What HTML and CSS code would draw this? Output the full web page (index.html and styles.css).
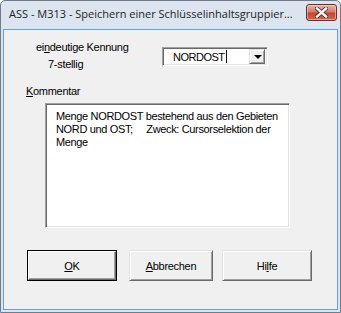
FILE: index.html
```html
<!DOCTYPE html>
<html>
<head>
<meta charset="utf-8">
<link rel="stylesheet" href="styles.css">
</head>
<body>
<div class="window">
  <div class="titlebar">
    <span class="title">ASS - M313 - Speichern einer Schlüsselinhaltsgruppier...</span>
    <div class="close">
      <svg width="13" height="11" viewBox="0 0 13 11">
        <path d="M2 1.5 L11 9.5 M11 1.5 L2 9.5" stroke="#4a2a2a" stroke-width="4" stroke-linecap="square"/>
        <path d="M2 1.5 L11 9.5 M11 1.5 L2 9.5" stroke="#ffffff" stroke-width="2.4" stroke-linecap="square"/>
      </svg>
    </div>
  </div>
  <div class="client">
    <div class="idrow">
      <div class="idlabels">
        <span class="lbl1">ei<u>n</u>deutige Kennung</span>
        <span class="lbl2">7-stellig</span>
      </div>
      <div class="combo">
        <span class="combotext">NORDOST<span class="caret"></span></span>
        <span class="dropbtn"><span class="tri"></span></span>
      </div>
    </div>
    <div class="kommentar"><u>K</u>ommentar</div>
    <div class="memo">Menge NORDOST bestehend aus den Gebieten<br>NORD und OST;&nbsp;&nbsp;&nbsp;&nbsp; Zweck: Cursorselektion der<br>Menge</div>
    <div class="buttons">
      <div class="btn default"><div class="btninner"><u>O</u>K</div></div>
      <div class="btn abbr"><div class="btninner"><u>A</u>bbrechen</div></div>
      <div class="btn"><div class="btninner">Hi<u>l</u>fe</div></div>
    </div>
  </div>
</div>
</body>
</html>
```
FILE: styles.css
```css
html, body {
  margin: 0;
  padding: 0;
  background: #ffffff;
}
.window {
  width: 341px;
  height: 313px;
  box-sizing: border-box;
  border: 1px solid #6f7c8a;
  border-radius: 5px 5px 0 0;
  background: #dbe4ef;
  padding: 0 2px 2px 2px;
  display: flex;
  flex-direction: column;
}
.titlebar {
  height: 28px;
  display: flex;
  align-items: flex-start;
  position: relative;
}
.title {
  font-family: "Open Sans", "DejaVu Sans", sans-serif;
  font-size: 11px;
  color: #1e1e1e;
  margin-top: 5px;
  margin-left: 6px;
  white-space: nowrap;
}
.close {
  position: absolute;
  left: 303px;
  top: 3px;
  width: 29px;
  height: 15px;
  border: 1px solid #6b2f2a;
  border-radius: 3px;
  background: linear-gradient(#eab3a8 0%, #d97a68 45%, #c8432f 55%, #d4664e 100%);
  box-shadow: inset 0 0 0 1px rgba(255,220,210,0.5);
  display: flex;
  align-items: center;
  justify-content: center;
}
.client {
  flex: 1;
  background: #f0f0f0;
  border: 1px solid #5aa3dc;
  font-family: "Liberation Sans", Arial, sans-serif;
  font-size: 11px;
  letter-spacing: -0.3px;
  color: #000;
  display: flex;
  flex-direction: column;
}
.idrow {
  display: flex;
  margin-top: 11px;
}
.idlabels {
  display: flex;
  flex-direction: column;
  width: 126px;
  padding-left: 32px;
}
.lbl1 {
  height: 17px;
}
.lbl2 {
  padding-left: 12px;
}
.combo {
  margin-top: 6px;
  width: 106px;
  height: 19px;
  box-sizing: border-box;
  border-top: 1px solid #a0a0a0;
  border-left: 1px solid #a0a0a0;
  border-right: 1px solid #ffffff;
  border-bottom: 1px solid #ffffff;
  box-shadow: inset 1px 1px 0 #696969, inset -1px -1px 0 #e3e3e3;
  background: #ffffff;
  display: flex;
  align-items: center;
  justify-content: space-between;
  padding: 2px 2px 2px 2px;
}
.combotext {
  padding-left: 8px;
  display: flex;
  align-items: center;
  color: #000;
  letter-spacing: -0.5px;
}
.caret {
  display: inline-block;
  width: 1px;
  height: 13px;
  background: #000;
  margin-left: 1px;
}
.dropbtn {
  width: 16px;
  height: 15px;
  box-sizing: border-box;
  background: #f0f0f0;
  border-top: 1px solid #e3e3e3;
  border-left: 1px solid #e3e3e3;
  border-right: 1px solid #696969;
  border-bottom: 1px solid #696969;
  box-shadow: inset 1px 1px 0 #ffffff, inset -1px -1px 0 #a0a0a0;
  display: flex;
  align-items: center;
  justify-content: center;
}
.tri {
  width: 0;
  height: 0;
  border-left: 4px solid transparent;
  border-right: 4px solid transparent;
  border-top: 4px solid #000;
  margin-left: 1px;
  margin-top: 1px;
}
.kommentar {
  margin-top: 15px;
  padding-left: 22px;
  height: 18px;
}
.memo {
  margin-left: 41px;
  width: 245px;
  height: 125px;
  box-sizing: border-box;
  background: #ffffff;
  border-top: 1px solid #a0a0a0;
  border-left: 1px solid #a0a0a0;
  border-right: 1px solid #ffffff;
  border-bottom: 1px solid #ffffff;
  box-shadow: inset 1px 1px 0 #696969, inset -1px -1px 0 #e3e3e3;
  padding: 6px 4px 0 10px;
  line-height: 13px;
  white-space: nowrap;
  letter-spacing: -0.35px;
}
.buttons {
  display: flex;
  margin-top: 22px;
  padding-left: 23px;
}
.btn {
  width: 90px;
  height: 31px;
  box-sizing: border-box;
  background: #f0f0f0;
  border-top: 1px solid #e3e3e3;
  border-left: 1px solid #e3e3e3;
  border-right: 1px solid #696969;
  border-bottom: 1px solid #696969;
  box-shadow: inset 1px 1px 0 #ffffff, inset -1px -1px 0 #a0a0a0;
  margin-right: 9px;
}
.btn.abbr {
  width: 84px;
}
.btn.default {
  border: 1px solid #000;
  box-shadow: none;
  margin-right: 12px;
}
.btn.default .btninner {
  border-top: 1px solid #ffffff;
  border-left: 1px solid #ffffff;
  border-right: 1px solid #696969;
  border-bottom: 1px solid #696969;
  box-shadow: inset -1px -1px 0 #a0a0a0;
}
.btninner {
  height: 100%;
  box-sizing: border-box;
  display: flex;
  align-items: center;
  justify-content: center;
}
u {
  text-decoration: underline;
  text-underline-offset: 1px;
}
```
